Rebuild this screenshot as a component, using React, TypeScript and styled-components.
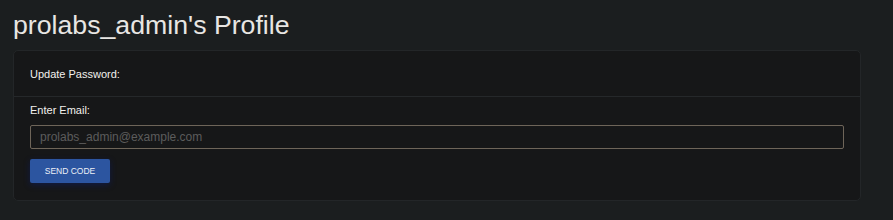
import React from "react";
import styled, { createGlobalStyle } from "styled-components";

const GlobalStyle = createGlobalStyle`
  html, body {
    margin: 0;
    padding: 0;
    background: #1b1e1f;
    font-family: "Liberation Sans", Arial, sans-serif;
  }
`;

function App() {
  return (
    <>
      <GlobalStyle />
      <Page>
        <Title>prolabs_admin's Profile</Title>
        <Card>
          <CardHeader>Update Password:</CardHeader>
          <CardBody>
            <Label htmlFor="email">Enter Email:</Label>
            <Input id="email" type="email" placeholder="prolabs_admin@example.com" />
            <Button>Send Code</Button>
          </CardBody>
        </Card>
      </Page>
    </>
  );
}

export default App;

const Page = styled.div`
  padding: 8px 32px 0 13px;
`;

const Title = styled.h1`
  margin: 0 0 8px;
  font-size: 26.7px;
  font-weight: 400;
  line-height: 34px;
  color: #e8e6e3;
`;

const Card = styled.div`
  background: #161718;
  border: 1px solid #232628;
  border-radius: 5px;
`;

const CardHeader = styled.div`
  height: 45px;
  padding: 0 16px;
  display: flex;
  align-items: center;
  font-size: 11px;
  color: #f2f0ed;
  border-bottom: 1px solid #25282a;
`;

const CardBody = styled.div`
  padding: 7px 16px 17px;
  display: flex;
  flex-direction: column;
  align-items: flex-start;
`;

const Label = styled.label`
  font-size: 11px;
  line-height: 13px;
  color: #f2f0ed;
  margin-bottom: 8px;
`;

const Input = styled.input`
  box-sizing: border-box;
  width: 100%;
  height: 24px;
  padding: 0 9px;
  background: #161718;
  border: 1px solid #6e6559;
  border-radius: 2px;
  font-family: inherit;
  font-size: 12px;
  color: #e8e6e3;
  outline: none;

  &::placeholder {
    color: #5c5c5c;
  }
`;

const Button = styled.button`
  margin-top: 10px;
  width: 80px;
  height: 24px;
  border: none;
  border-radius: 2px;
  background: #2c55a0;
  color: #eef0f6;
  font-family: inherit;
  font-size: 8.5px;
  text-transform: uppercase;
  box-shadow: 0 2px 6px rgba(10, 30, 120, 0.45);
  cursor: pointer;
`;
